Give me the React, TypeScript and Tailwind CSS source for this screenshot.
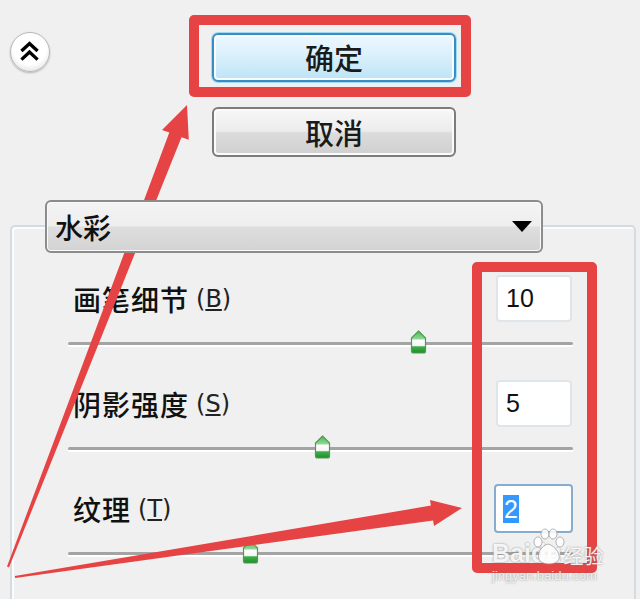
import React from "react";

type Param = { label: string; key: string; value: string; thumb: number; focused?: boolean };

const params: Param[] = [
  { label: "画笔细节", key: "B", value: "10", thumb: 418 },
  { label: "阴影强度", key: "S", value: "5", thumb: 322 },
  { label: "纹理", key: "T", value: "2", thumb: 250, focused: true },
];

function Thumb({ center }: { center: number }) {
  return (
    <svg
      className="absolute top-[-1px]"
      style={{ left: center - 68 - 8.5 }}
      width="17"
      height="24"
      viewBox="0 0 17 24"
    >
      <defs>
        <linearGradient id="tg" x1="0" y1="0" x2="0" y2="1">
          <stop offset="0" stopColor="#46b94f" />
          <stop offset="0.35" stopColor="#8fd693" />
          <stop offset="0.42" stopColor="#ffffff" />
          <stop offset="0.66" stopColor="#f4f4f4" />
          <stop offset="0.72" stopColor="#3fae48" />
          <stop offset="1" stopColor="#1e8f2a" />
        </linearGradient>
      </defs>
      <path
        d="M8.5 1 L15.5 8 L15.5 21 Q15.5 23 13.5 23 L3.5 23 Q1.5 23 1.5 21 L1.5 8 Z"
        fill="url(#tg)"
        stroke="#4f9a55"
        strokeWidth="1.2"
      />
    </svg>
  );
}

export default function App() {
  return (
    <div className="relative w-[640px] h-[599px] overflow-hidden bg-[#f0f0f0] font-['Liberation_Sans','Noto_Sans_CJK_SC',sans-serif] text-[#111]">
      {/* top row */}
      <div className="flex pt-[32px]">
        <div className="ml-[10px] w-[40px] h-[40px] rounded-full border border-[#b8b8b8] bg-[radial-gradient(circle_at_50%_40%,#ffffff_55%,#d2d2d2_100%)] shadow-[0_1px_2px_rgba(0,0,0,0.25)] flex items-center justify-center">
          <svg width="40" height="40" viewBox="0 0 40 40">
            <polyline points="11,19 19.5,11 28,19" fill="none" stroke="#000" strokeWidth="3.5" />
            <polyline points="11,28 19.5,20 28,28" fill="none" stroke="#000" strokeWidth="3.5" />
          </svg>
        </div>
        <div className="ml-[162px] mt-[1px] flex flex-col gap-[25px]">
          <div className="w-[244px] h-[49px] rounded-[6px] border-2 border-[#3a8cc2] bg-[linear-gradient(#eef8fe,#d8effb_50%,#bde3f7)] shadow-[0_0_0_1px_#9fdaf5,inset_0_0_0_2px_#f6fcff] flex items-center justify-center text-[29px] font-medium leading-none font-['Noto_Sans_CJK_SC',sans-serif] text-[#1a1a1a]">
            确定
          </div>
          <div className="w-[244px] h-[50px] rounded-[6px] border-2 border-[#7c7c7c] bg-[linear-gradient(#f7f7f7,#ececec_48%,#dcdcdc_52%,#cfcfcf)] shadow-[inset_0_0_0_2px_#fbfbfb] flex items-center justify-center text-[29px] font-medium leading-none font-['Noto_Sans_CJK_SC',sans-serif] text-[#1a1a1a]">
            取消
          </div>
        </div>
      </div>

      {/* dropdown */}
      <div className="relative z-10 mt-[43px] ml-[45px] w-[498px] h-[53px] rounded-[6px] border-2 border-[#8c8c8c] bg-[linear-gradient(#f4f4f4,#eeeeee_48%,#dedede_52%,#d3d3d3)] shadow-[inset_0_0_0_1px_#fafafa] flex items-center justify-between pl-[8px] pr-[9px]">
        <span className="text-[28px] font-medium leading-none font-['Noto_Sans_CJK_SC',sans-serif]">水彩</span>
        <svg width="20" height="11" viewBox="0 0 20 11">
          <polygon points="0,0 20,0 10,11" fill="#000" />
        </svg>
      </div>

      {/* group box */}
      <div className="-mt-[28px] ml-[10px] w-[626px] h-[420px] rounded-[5px] border-2 border-[#d4dce3] shadow-[inset_2px_2px_0_#fbfcfd] pt-[48px] pl-[56px]">
        <div className="w-[505px] flex flex-col gap-[25px]">
          {params.map((p) => (
            <div key={p.key} className="flex flex-col">
              <div className="flex items-center justify-between h-[47px]">
                <div className="pl-[5px] flex items-center">
                  <span className="text-[28px] font-medium leading-none tracking-[1px] font-['Noto_Sans_CJK_SC',sans-serif]">
                    {p.label}
                  </span>
                  <span className="ml-[7px] text-[24px] leading-none font-['DejaVu_Sans',sans-serif] text-[#222]">
                    (<span className="underline underline-offset-2">{p.key}</span>)
                  </span>
                </div>
                {p.focused ? (
                  <div className="w-[79px] h-[49px] rounded-[4px] border-2 border-[#86acd0] bg-white flex items-center pl-[7px]">
                    <span className="bg-[#3399ff] text-white text-[25px] leading-[28px] px-[1px]">{p.value}</span>
                  </div>
                ) : (
                  <div className="mr-[1px] w-[76px] h-[47px] rounded-[4px] border-2 border-[#e0e5e9] bg-white flex items-center pl-[8px]">
                    <span className="text-[25px] leading-none">{p.value}</span>
                  </div>
                )}
              </div>
              <div className="relative mt-[9px] h-[24px] flex items-center">
                <div className="w-full h-[3px] rounded-full bg-[#a4a4a4] shadow-[0_2px_0_#ffffff]" />
                <Thumb center={p.thumb} />
              </div>
            </div>
          ))}
        </div>
      </div>

      {/* annotation boxes */}
      <div className="absolute left-[189px] top-[15px] w-[282px] h-[82px] rounded-[5px] border-[10px] border-[#e64444]" />
      <div className="absolute left-[472px] top-[262px] w-[125px] h-[311px] rounded-[5px] border-[10px] border-[#e64444]" />

      {/* arrows */}
      <svg className="absolute inset-0 pointer-events-none" width="640" height="599" viewBox="0 0 640 599">
        <polygon
          points="7,566.6 169.3,132.6 162,130 187,105 188.8,139.7 181.5,137.2 9,567.4"
          fill="#e64444"
        />
        <polygon
          points="14.8,576 430.9,505.6 430,500 462,508 434,526 433.1,520.4 15.2,578"
          fill="#e64444"
        />
      </svg>

      {/* watermark */}
      <div className="absolute left-[492px] top-[528px] w-[120px] text-white/90 [text-shadow:0_0_2px_rgba(120,120,120,0.9)]">
        <div className="relative flex items-end h-[38px]">
          <span className="text-[25px] font-bold leading-none font-['Liberation_Sans',sans-serif]">Baidu</span>
          <span className="ml-[2px] text-[20px] leading-none font-['Noto_Sans_CJK_SC',sans-serif]">经验</span>
          <svg className="absolute left-[38px] top-[0px]" width="36" height="38" viewBox="0 0 36 38">
            <g fill="rgba(255,255,255,0.85)" stroke="rgba(150,150,150,0.7)" strokeWidth="1">
              <ellipse cx="8" cy="14" rx="4" ry="5" />
              <ellipse cx="15" cy="6" rx="4" ry="5" />
              <ellipse cx="23" cy="6" rx="4" ry="5" />
              <ellipse cx="30" cy="14" rx="4" ry="5" />
              <path d="M18 16 C10 18 6 28 10 33 C14 37 24 37 28 33 C32 28 26 18 18 16 Z" />
            </g>
          </svg>
        </div>
        <div className="text-[13px] leading-none mt-[3px] text-white/80 font-['Liberation_Sans',sans-serif]">jingyan.baidu.com</div>
      </div>
    </div>
  );
}
